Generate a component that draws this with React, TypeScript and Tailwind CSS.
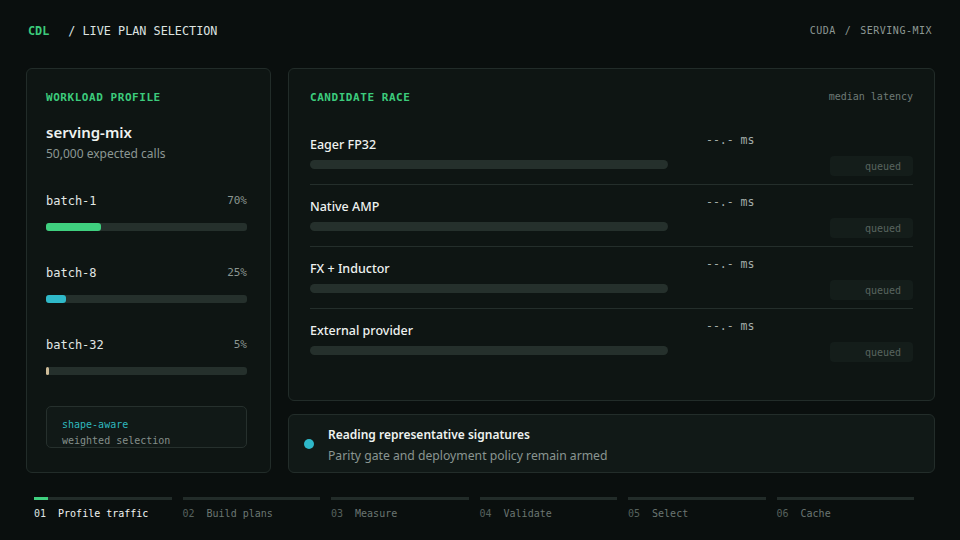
import React from "react";

const mono = "font-['DejaVu_Sans_Mono','Liberation_Mono',monospace]";
const sans = "font-['Noto_Sans','Open_Sans',sans-serif]";

type Batch = { name: string; pct: string; fill: number; color: string };

const batches: Batch[] = [
  { name: "batch-1", pct: "70%", fill: 55, color: "bg-[#3fd07f]" },
  { name: "batch-8", pct: "25%", fill: 20, color: "bg-[#2fb9c9]" },
  { name: "batch-32", pct: "5%", fill: 3, color: "bg-[#cdbb98]" },
];

const candidates = ["Eager FP32", "Native AMP", "FX + Inductor", "External provider"];

const steps = [
  { n: "01", label: "Profile traffic" },
  { n: "02", label: "Build plans" },
  { n: "03", label: "Measure" },
  { n: "04", label: "Validate" },
  { n: "05", label: "Select" },
  { n: "06", label: "Cache" },
];

function WorkloadCard() {
  return (
    <div className="w-[245px] h-[405px] shrink-0 rounded-[6px] border border-[#222c29] bg-[#0e1513] pl-[19px] pt-[20px]">
      <div className="w-[201px]">
        <div className={`${mono} text-[11px] leading-[18px] font-bold tracking-[0.05em] text-[#3ccb7c]`}>
          WORKLOAD PROFILE
        </div>
        <div className={`${sans} mt-[15px] text-[15px] leading-[20px] font-semibold text-[#eef2f0]`}>serving-mix</div>
        <div className={`${sans} mt-[4px] text-[12px] leading-[16px] text-[#8c9793]`}>50,000 expected calls</div>

        <div className="mt-[31px] flex flex-col gap-[34px]">
          {batches.map((b) => (
            <div key={b.name}>
              <div className={`${mono} flex items-center justify-between leading-[16px]`}>
                <span className="text-[12px] text-[#e2e8e5]">{b.name}</span>
                <span className="text-[11px] text-[#8a9591]">{b.pct}</span>
              </div>
              <div className="mt-[14px] h-[8px] w-[201px] rounded-[3px] bg-[#25302c]">
                <div className={`h-full rounded-[3px] ${b.color}`} style={{ width: b.fill }} />
              </div>
            </div>
          ))}
        </div>

        <div className={`${mono} mt-[31px] h-[42px] w-[201px] overflow-hidden rounded-[5px] border border-[#26302d] bg-[#111917] pl-[15px] pt-[10px] text-[10px] leading-[16px]`}>
          <div className="text-[#2fb7bd]">shape-aware</div>
          <div className="text-[#858f8b]">weighted selection</div>
        </div>
      </div>
    </div>
  );
}

function CandidateCard() {
  return (
    <div className="h-[333px] rounded-[6px] border border-[#222c29] bg-[#0e1513] px-[21px] pt-[20px]">
      <div className="flex w-[603px] items-center justify-between">
        <span className={`${mono} text-[11px] leading-[18px] font-bold tracking-[0.05em] text-[#3ccb7c]`}>
          CANDIDATE RACE
        </span>
        <span className={`${mono} pb-[3px] text-[10px] leading-[14px] text-[#6f7a76]`}>median latency</span>
      </div>
      <div className="mt-[16px] w-[603px]">
        {candidates.map((c, i) => (
          <div
            key={c}
            className={`flex pt-[10px] pb-[8px] ${i < candidates.length - 1 ? "border-b border-[#242e2b]" : ""}`}
          >
            <div className="w-[358px] shrink-0 pt-[3px]">
              <div className={`${sans} text-[12.5px] leading-[18px] font-medium text-[#eef2f0]`}>{c}</div>
              <div className="mt-[6px] h-[9px] rounded-full bg-[#25302c]" />
            </div>
            <div className="ml-[38px] flex flex-1 flex-col">
              <div className={`${mono} text-[11.5px] leading-[14px] text-[#a4ada9]`}>--.- ms</div>
              <div className="mt-[9px] self-end flex h-[20px] w-[83px] items-center justify-end rounded-[4px] bg-[#141d1a] pr-[12px]">
                <span className={`${mono} text-[10px] text-[#59645f]`}>queued</span>
              </div>
            </div>
          </div>
        ))}
      </div>
    </div>
  );
}

function StatusCard() {
  return (
    <div className="flex h-[59px] items-center rounded-[6px] border border-[#232d2a] bg-[#111917] pl-[15px]">
      <div className="h-[10px] w-[10px] rounded-full bg-[#2eb8c9]" />
      <div className={`${sans} ml-[14px] pt-[4px]`}>
        <div className="text-[12px] leading-[18px] font-semibold text-[#eef2f0]">Reading representative signatures</div>
        <div className="mt-[3px] text-[12.2px] leading-[18px] text-[#8a9591]">Parity gate and deployment policy remain armed</div>
      </div>
    </div>
  );
}

export default function App() {
  return (
    <div className="h-[540px] w-[960px] overflow-hidden bg-[#0a0f0e]">
      <div className="flex h-[60px] items-center justify-between pl-[28px] pr-[28px] pt-[1px]">
        <div className={`${mono} flex items-center text-[11.8px] leading-[16px]`}>
          <span className="font-semibold text-[#3ccb7c]">CDL</span>
          <span className="ml-[19px] text-[#dde3e0]">/ LIVE PLAN SELECTION</span>
        </div>
        <div className={`${mono} flex items-center text-[10px] leading-[16px] tracking-[0.05em] text-[#8d9894]`}>
          <span>CUDA</span>
          <span className="mx-[9px]">/</span>
          <span>SERVING-MIX</span>
        </div>
      </div>

      <div className="mt-[8px] flex gap-[17px] pl-[26px] pr-[25px]">
        <WorkloadCard />
        <div className="flex flex-1 flex-col gap-[13px]">
          <CandidateCard />
          <StatusCard />
        </div>
      </div>

      <div className="mt-[24px] grid w-[880px] grid-cols-6 gap-[11px] ml-[34px]">
        {steps.map((s, i) => (
          <div key={s.n}>
            <div className="h-[3px] bg-[#222c29]">
              {i === 0 && <div className="h-full w-[14px] bg-[#3fd07f]" />}
            </div>
            <div className={`${mono} mt-[7px] flex gap-[12px] text-[10px] leading-[14px]`}>
              <span className={i === 0 ? "text-[#dfe5e2]" : "text-[#56615d]"}>{s.n}</span>
              <span className={i === 0 ? "text-[#f1f4f2]" : "text-[#6b7672]"}>{s.label}</span>
            </div>
          </div>
        ))}
      </div>
    </div>
  );
}
